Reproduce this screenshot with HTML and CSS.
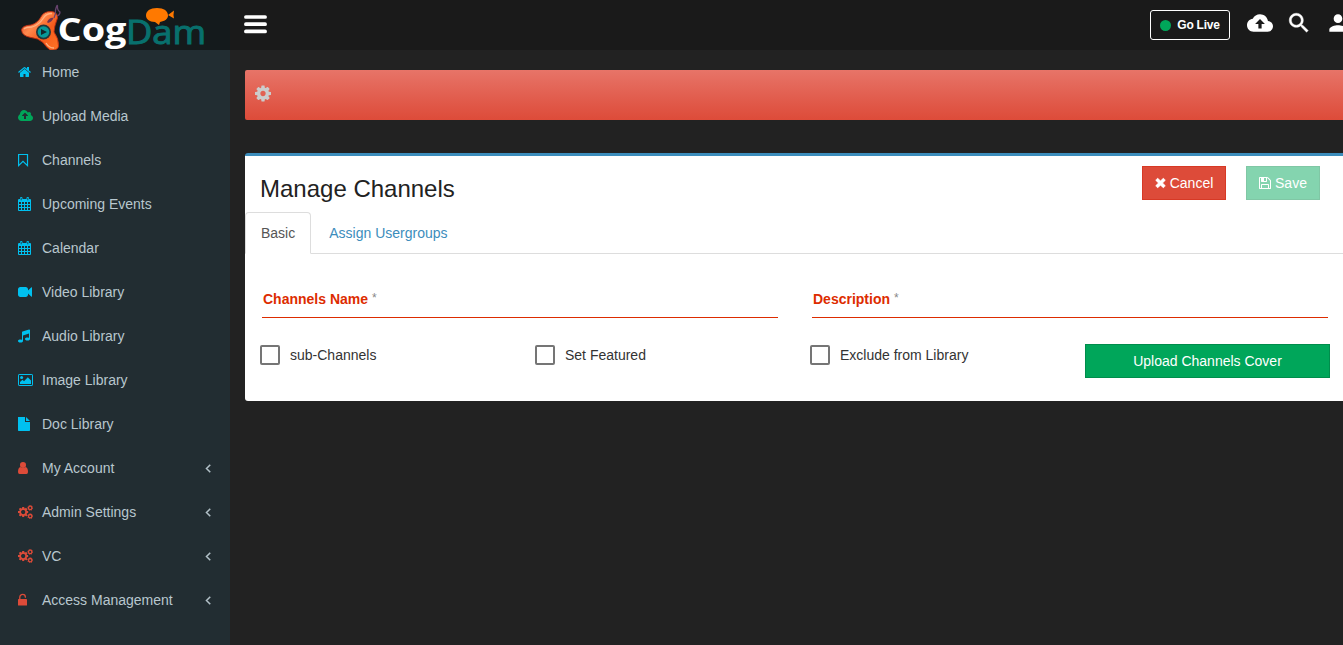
FILE: index.html
```html
<!DOCTYPE html>
<html lang="en">
<head>
<meta charset="utf-8">
<title>Manage Channels</title>
<link rel="stylesheet" href="styles.css">
</head>
<body>
<svg class="defs" aria-hidden="true">
  <symbol id="cal" viewBox="0 0 14 14"><path d="M1.2 2H12q1 0 1 1V13q0 1-1 1H1Q0 14 0 13V3Q0 2 1.2 2ZM1 5V7H3V5ZM4 5V7H6V5ZM7 5V7H9V5ZM10 5V7H12V5ZM1 8V10H3V8ZM4 8V10H6V8ZM7 8V10H9V8ZM10 8V10H12V8ZM1 11V13H3V11ZM4 11V13H6V11ZM7 11V13H9V11ZM10 11V13H12V11Z" fill-rule="evenodd"/><path d="M2 1Q2 0 3.2 0T4.5 1V4H2ZM8.5 1Q8.5 0 9.8 0T11 1V4H8.5Z"/><path d="M3.2 1V3.3M9.8 1V3.3" stroke="#222d32" stroke-width=".8"/></symbol>
  <symbol id="cog" viewBox="128 128 1536 1536"><path d="M1152 896q0-106-75-181t-181-75-181 75-75 181 75 181 181 75 181-75 75-181zm512-109v222q0 12-8 23t-20 13l-185 28q-19 54-39 91 35 50 107 138 10 12 10 25t-9 23q-27 37-99 108t-94 71q-12 0-26-9l-138-108q-44 23-91 38-16 136-29 186-7 28-36 28h-222q-14 0-24.500-8.500t-11.500-21.500l-28-184q-49-16-90-37l-141 107q-10 9-25 9-14 0-25-11-126-114-165-168-7-10-7-23 0-12 8-23 15-21 51-66.500t54-70.500q-27-50-41-99l-183-27q-13-2-21-12.500t-8-23.500v-222q0-12 8-23t19-13l186-28q14-46 39-92-40-57-107-138-10-12-10-24 0-10 9-23 26-36 98.500-107.500t94.500-71.500q13 0 26 10l138 107q44-23 91-38 16-136 29-186 7-28 36-28h222q14 0 24.500 8.500t11.500 21.500l28 184q49 16 90 37l142-107q9-9 24-9 13 0 25 10 129 119 165 170 7 8 7 22 0 12-8 23-15 21-51 66.500t-54 70.500q26 50 41 98l183 28q13 2 21 12.500t8 23.500z"/></symbol>
  <symbol id="cogs" viewBox="0 0 15 14"><use href="#cog" x="0" y="1.900" width="10.400" height="10.400"/><circle cx="5.200" cy="7.100" r="2.100" fill="#222d32"/><g fill="none" stroke="currentColor"><circle cx="12.200" cy="2.900" r="1.700" stroke-width="1.300"/><circle cx="12.200" cy="11.200" r="1.700" stroke-width="1.300"/><circle cx="12.200" cy="2.900" r="2.500" stroke-width=".8" stroke-dasharray="1 .96"/><circle cx="12.200" cy="11.200" r="2.500" stroke-width=".8" stroke-dasharray="1 .96"/></g></symbol>
  <symbol id="left" viewBox="0 0 1792 1792"><path d="M1203 544q0 13-10 23l-393 393 393 393q10 10 10 23t-10 23l-50 50q-10 10-23 10t-23-10l-466-466q-10-10-10-23t10-23l466-466q10-10 23-10t23 10l50 50q10 10 10 23z" stroke="currentColor" stroke-width="60"/></symbol>
</svg>

<header class="topbar">
  <a class="logo">
    <svg width="230" height="50" viewBox="0 0 230 50">
      <defs><linearGradient id="flame" x1="0" y1="0" x2="1" y2="1"><stop offset="0" stop-color="#d83214"/><stop offset=".35" stop-color="#ff8a4e"/><stop offset=".6" stop-color="#f65b1c"/><stop offset="1" stop-color="#ff7426"/></linearGradient></defs>
      <path d="M21.500 30Q22 25.500 31 25Q38 23 41.500 16Q44 11.500 51 11.500Q58 12 57.500 18Q54 27 54 32Q59 39 58.500 46Q58 50 53 50H50Q46 47 43 42.500Q38 38 31 37.500Q22 36 21.500 30Z" fill="url(#flame)" stroke="#bd2d12" stroke-width=".9"/>
      <path d="M24 29Q26 27 32 27Q39 25 43.500 18Q46 13.500 52 13.500M46 43Q49 48 54 48" fill="none" stroke="#ffb184" stroke-width="1.300"/>
      <path d="M47 22Q50 17 53.500 18Q52 22 48 23Z" fill="#713350"/>
      <path d="M54 18Q56 14 55.500 10Q57 4 57.500 6Q57 10 60 12Q60 15 57 16" fill="none" stroke="#66436d" stroke-width="1.300"/>
      <circle cx="43.500" cy="32" r="7.500" fill="#24373a"/><circle cx="43.500" cy="32" r="5.800" fill="#079999"/><path d="M41 29L47 32L41 35Z" fill="#11272b"/>
      <text class="logo-cog" x="57.500" y="41" textLength="69" lengthAdjust="spacingAndGlyphs">Cog</text>
      <text class="logo-dam" x="126" y="43.500" textLength="80" lengthAdjust="spacingAndGlyphs">Dam</text>
      <path d="M157 8C164 8 168 11 168 15.500C168 19 165 21 160 22L159 25L155 22C149 22 146 19 146 15.500C146 11 150 8 157 8ZM168 15L174 10.500Q173 15 174 18.500Z" fill="#ff7900"/>
    </svg>
  </a>
  <div class="navbar">
    <svg class="burger" width="23" height="19" viewBox="0 0 23 19"><path d="M1.900 2H21.100M1.900 9.200H21.100M1.900 16.400H21.100" stroke="#fff" stroke-width="3.700" stroke-linecap="round"/></svg>
    <div class="actions">
      <button class="golive"><span class="dot"></span>Go Live</button>
      <svg class="mat" viewBox="0 0 24 24"><path d="M19.350 10.040C18.670 6.590 15.640 4 12 4 9.110 4 6.600 5.640 5.350 8.040 2.340 8.360 0 10.910 0 14c0 3.310 2.690 6 6 6h13c2.760 0 5-2.240 5-5 0-2.640-2.050-4.780-4.650-4.960zM13.500 13v4h-3v-4H7.500l4.500-4.700 4.500 4.700z"/></svg>
      <svg class="mat" viewBox="0 0 24 24"><path stroke="currentColor" stroke-width=".4" d="M15.500 14h-.79l-.28-.27C15.410 12.590 16 11.110 16 9.500 16 5.910 13.090 3 9.500 3S3 5.910 3 9.500 5.910 16 9.500 16c1.610 0 3.090-.59 4.230-1.570l.27.28v.79l5 4.990L20.490 19l-4.990-5zm-6 0C7.010 14 5 11.990 5 9.500S7.010 5 9.500 5 14 7.010 14 9.500 11.990 14 9.500 14z"/></svg>
      <svg class="mat" viewBox="0 0 24 24"><path d="M12 12c2.210 0 4-1.790 4-4s-1.790-4-4-4-4 1.790-4 4 1.790 4 4 4zm0 2c-2.670 0-8 1.340-8 4v2h16v-2c0-2.660-5.330-4-8-4z"/></svg>
    </div>
  </div>
</header>

<div class="shell">
  <nav class="sidebar">
    <a class="item aqua"><svg viewBox="64 0 1920 1792"><path d="M1472 992v480q0 26-19 45t-45 19h-384v-384h-256v384h-384q-26 0-45-19t-19-45v-480q0-1 .5-3t.5-3l575-474 575 474q1 2 1 6zm223-69l-62 74q-8 9-21 11h-3q-13 0-21-7l-692-577-692 577q-12 8-24 7-13-2-21-11l-62-74q-8-10-7-23.500t11-21.500l719-599q32-26 76-26t76 26l244 204v-195q0-14 9-23t23-9h192q14 0 23 9t9 23v408l219 182q10 8 11 21.500t-7 23.500z"/></svg><span>Home</span></a>
    <a class="item green"><svg viewBox="-64 0 1920 1792"><path d="M1216 864q0-14-9-23l-352-352q-9-9-23-9t-23 9l-351 351q-10 12-10 24 0 14 9 23t23 9h224v352q0 13 9.500 22.500t22.500 9.500h192q13 0 22.500-9.500t9.500-22.500v-352h224q13 0 22.500-9.500t9.500-22.500zm640 288q0 159-112.500 271.500t-271.500 112.500h-1088q-185 0-316.500-131.500t-131.500-316.500q0-130 70-240t188-165q-2-30-2-43 0-212 150-362t362-150q156 0 285.500 87t188.500 231q71-62 166-62 106 0 181 75t75 181q0 76-41 138 130 31 213.500 135.500t83.500 238.500z"/></svg><span>Upload Media</span></a>
    <a class="item aqua"><svg viewBox="0 0 15 14"><path d="M.6 1.500H9.500V12.600L5 8.400L.6 12.600Z" fill="none" stroke="currentColor" stroke-width="1.200"/></svg><span>Channels</span></a>
    <a class="item aqua"><svg viewBox="0 0 15 14"><use href="#cal" width="14" height="14"/></svg><span>Upcoming Events</span></a>
    <a class="item aqua"><svg viewBox="0 0 15 14"><use href="#cal" width="14" height="14"/></svg><span>Calendar</span></a>
    <a class="item aqua"><svg viewBox="0 0 1920 1792"><path d="M1792 352v1088q0 42-39 59-13 5-25 5-27 0-45-19l-403-403v166q0 119-84.500 203.500t-203.500 84.500h-704q-119 0-203.500-84.500t-84.500-203.500v-704q0-119 84.500-203.500t203.500-84.500h704q119 0 203.500 84.500t84.500 203.500v165l403-402q18-19 45-19 12 0 25 5 39 17 39 59z"/></svg><span>Video Library</span></a>
    <a class="item aqua"><svg viewBox="128 64 1920 1792"><path d="M1664 224v1120q0 50-34 89t-86 60.500-103.500 32-96.500 10.500-96.500-10.500-103.500-32-86-60.500-34-89 34-89 86-60.500 103.500-32 96.500-10.500q105 0 192 39v-537l-768 237v709q0 50-34 89t-86 60.500-103.500 32-96.500 10.500-96.500-10.500-103.500-32-86-60.500-34-89 34-89 86-60.500 103.500-32 96.500-10.500q105 0 192 39v-967q0-31 19-56.500t49-35.500l832-256q12-4 28-4 40 0 68 28t28 68z"/></svg><span>Audio Library</span></a>
    <a class="item aqua"><svg viewBox="0 0 15 14"><rect x=".5" y="1.500" width="14" height="11" rx=".6" fill="none" stroke="currentColor"/><circle cx="3.600" cy="4.500" r="1.500"/><path d="M2 11V9L4.500 6.800L6 8.200L9.800 4.300L13 7.400V11Z"/></svg><span>Image Library</span></a>
    <a class="item aqua"><svg viewBox="0 0 15 14"><path d="M0 0H7V5H12V13.300Q12 14 11.300 14H.7Q0 14 0 13.300ZM8 0L12 4H8Z"/></svg><span>Doc Library</span></a>
    <a class="item red"><svg viewBox="0 0 15 14"><circle cx="5" cy="4" r="3.050"/><path d="M2.500 6Q5 8 7.500 6Q10 6.500 10 11Q10 13 8.400 13H1.600Q0 13 0 11Q0 6.500 2.500 6Z"/></svg><span>My Account</span><svg class="caret"><use href="#left"/></svg></a>
    <a class="item red"><svg><use href="#cogs"/></svg><span>Admin Settings</span><svg class="caret"><use href="#left"/></svg></a>
    <a class="item red"><svg><use href="#cogs"/></svg><span>VC</span><svg class="caret"><use href="#left"/></svg></a>
    <a class="item red"><svg viewBox="0 0 15 14"><path d="M1.800 6.500V4.200A2.800 2.800 0 0 1 7.400 4.200" fill="none" stroke="currentColor" stroke-width="1.300" stroke-linecap="round"/><rect y="6" width="9" height="6.600" rx=".6"/></svg><span>Access Management</span><svg class="caret"><use href="#left"/></svg></a>
  </nav>

  <main class="content">
    <div class="alert"><svg><use href="#cog"/></svg></div>
    <section class="box">
      <div class="box-head">
        <h1>Manage Channels</h1>
        <div class="buttons">
          <button class="btn cancel"><svg width="11" height="14" viewBox="192 64 1408 1792"><path d="M1490 1322q0 40-28 68l-136 136q-28 28-68 28t-68-28l-294-294-294 294q-28 28-68 28t-68-28l-136-136q-28-28-28-68t28-68l294-294-294-294q-28-28-28-68t28-68l136-136q28-28 68-28t68 28l294 294 294-294q28-28 68-28t68 28l136 136q28 28 28 68t-28 68l-294 294 294 294q28 28 28 68z" stroke="currentColor" stroke-width="70"/></svg>Cancel</button>
          <button class="btn save"><svg width="12" height="14" viewBox="128 0 1536 1792"><path d="M512 1536h768v-384h-768v384zm896 0h128v-896q0-14-10-38.500t-20-34.500l-281-281q-10-10-34-20t-39-10v416q0 40-28 68t-68 28h-576q-40 0-68-28t-28-68v-416h-128v1280h128v-416q0-40 28-68t68-28h832q40 0 68 28t28 68v416zm-384-928v-320q0-13-9.500-22.500t-22.500-9.500h-192q-13 0-22.500 9.500t-9.500 22.500v320q0 13 9.500 22.500t22.500 9.500h192q13 0 22.500-9.500t9.500-22.500zm640 32v928q0 40-28 68t-68 28h-1344q-40 0-68-28t-28-68v-1344q0-40 28-68t68-28h928q40 0 88 20t76 48l280 280q28 28 48 76t20 88z"/></svg>Save</button>
        </div>
      </div>
      <div class="tabs"><a class="tab active">Basic</a><a class="tab">Assign Usergroups</a></div>
      <div class="fields">
        <label class="field">Channels Name<sup>*</sup></label>
        <label class="field">Description<sup>*</sup></label>
      </div>
      <div class="options">
        <label class="check"><i></i>sub-Channels</label>
        <label class="check"><i></i>Set Featured</label>
        <label class="check"><i></i>Exclude from Library</label>
        <button class="btn cover">Upload Channels Cover</button>
      </div>
    </section>
  </main>
</div>
</body>
</html>
```
FILE: styles.css
```css
* { box-sizing: border-box; }
body {
  margin: 0;
  height: 645px;
  overflow: hidden;
  background: #222;
  font: 14px/20px "Liberation Sans", Arial, sans-serif;
  color: #333;
}
.defs { display: none; }
svg { fill: currentColor; flex: none; }
button { font: inherit; margin: 0; }

.topbar { display: flex; height: 50px; }
.logo { width: 230px; flex: none; background: #141a1c; }
.logo svg { display: block; }
.logo-cog { font: bold 32px "Open Sans", sans-serif; fill: #fff; }
.logo-dam { font: 32px "Open Sans", sans-serif; fill: #08706d; stroke: #08706d; stroke-width: 1; }
.navbar {
  flex: 1;
  display: flex;
  justify-content: space-between;
  background: #1a1a1a;
  color: #fff;
}
.burger { margin: 15px 0 0 14px; }
.actions { display: flex; gap: 13px; padding-top: 10px; margin-right: -8px; }
.golive {
  display: flex;
  align-items: center;
  justify-content: center;
  gap: 6px;
  width: 80px;
  height: 30px;
  margin-right: 4px;
  padding: 0;
  background: transparent;
  border: 1px solid #fff;
  border-radius: 3px;
  color: #fff;
  font-size: 12px;
  font-weight: bold;
  letter-spacing: -.25px;
}
.dot { width: 11px; height: 11px; border-radius: 50%; background: #00a65a; }
.mat { width: 26px; height: 26px; }

.shell { display: flex; height: 595px; }
.sidebar { width: 230px; flex: none; background: #222d32; }
.item {
  display: flex;
  align-items: center;
  height: 44px;
  padding: 0 15px 0 18px;
}
.item > svg:first-child { width: 15px; height: 14px; }
.item span { flex: 1; margin-left: 9px; color: #b8c7ce; white-space: nowrap; }
.item .caret { width: 14px; height: 14px; color: #b8c7ce; }
.aqua { color: #00c0ef; }
.green { color: #00a65a; }
.red { color: #dd4b39; }

.content { width: 1130px; flex: none; padding: 20px 15px; }
.alert {
  height: 50px;
  padding: 15px 10px;
  border-radius: 2px;
  background: linear-gradient(#e77468, #dd4b39);
  color: #ccc;
}
.alert svg { display: block; width: 16px; height: 17px; }
.box {
  height: 248px;
  margin-top: 33px;
  background: #fff;
  border-top: 3px solid #3c8dbc;
  border-radius: 3px;
}
.box-head { display: flex; justify-content: space-between; height: 56px; padding: 10px 25px 0 15px; }
h1 { margin: 9px 0 0; font-size: 24px; line-height: 28px; font-weight: normal; color: #222; }
.buttons { display: flex; gap: 20px; }
.btn {
  display: flex;
  align-items: center;
  justify-content: center;
  gap: 4px;
  height: 34px;
  padding: 0;
  border: 1px solid;
  color: #fff;
}
.cancel { width: 84px; background: #dd4b39; border-color: #d73925; }
.save { width: 74px; background: #84d4af; border-color: #80c7a5; }
.cover { background: #00a65a; border-color: #008d4c; }
.tabs { display: flex; height: 42px; border-bottom: 1px solid #ddd; }
.tab { height: 42px; padding: 10px 15px; margin-right: 2px; border: 1px solid transparent; color: #3c8dbc; }
.tab.active { color: #555; background: #fff; border-color: #ddd; border-bottom-color: #fff; border-radius: 4px 4px 0 0; }
.fields { display: grid; grid-template-columns: 516px 516px; gap: 34px; padding: 32px 17px 0; }
.field { height: 32px; padding: 3px 1px 0; border-bottom: 1px solid #dd2c00; font-weight: bold; color: #dd2c00; }
.field sup { margin-left: 4px; font-size: 12px; line-height: 0; font-weight: normal; vertical-align: 2px; color: #888; }
.options { display: grid; grid-template-columns: 275px 275px 275px 245px; padding: 26px 15px 0; }
.check { display: flex; gap: 10px; height: 22px; align-items: center; }
.check i { width: 20px; height: 20px; border: 2px solid #757575; border-radius: 2px; }
```
